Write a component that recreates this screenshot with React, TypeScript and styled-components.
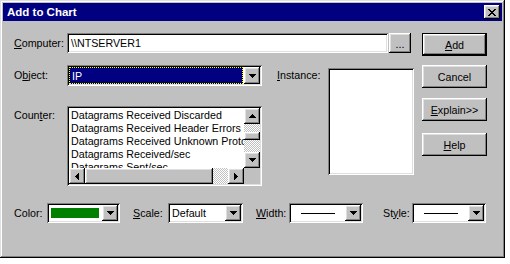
import styled, { createGlobalStyle, css } from "styled-components";

const GlobalStyle = createGlobalStyle`
  html, body {
    margin: 0;
    padding: 0;
    background: #fff;
  }
  body {
    font-family: "Liberation Sans", Arial, sans-serif;
    font-size: 10.7px;
    color: #000;
  }
`;

const raised = css`
  background: #c0c0c0;
  box-shadow: inset -1px -1px #000, inset 1px 1px #fff, inset -2px -2px #808080,
    inset 2px 2px #dfdfdf;
`;

const sunken = css`
  background: #fff;
  box-shadow: inset 1px 1px #808080, inset -1px -1px #fff, inset 2px 2px #000,
    inset -2px -2px #dfdfdf;
`;

const counters = [
  "Datagrams Received Discarded",
  "Datagrams Received Header Errors",
  "Datagrams Received Unknown Protocol",
  "Datagrams Received/sec",
  "Datagrams Sent/sec",
];

type Dir = "up" | "down" | "left" | "right";

const Arrow = ({ dir }: { dir: Dir }) => {
  const shapes: Record<Dir, string> = {
    down: "0,0 7,0 3.5,4",
    up: "3.5,0 7,4 0,4",
    left: "4,0 4,7 0,3.5",
    right: "0,0 4,3.5 0,7",
  };
  const vertical = dir === "up" || dir === "down";
  return (
    <svg width={vertical ? 7 : 4} height={vertical ? 4 : 7} shapeRendering="crispEdges">
      <polygon points={shapes[dir]} fill="#000" />
    </svg>
  );
};

const CloseGlyph = () => (
  <svg width="8" height="7" shapeRendering="crispEdges">
    <path
      d="M0 0h2v1h-2zM6 0h2v1h-2zM1 1h2v1h-2zM5 1h2v1h-2zM2 2h4v1h-4zM3 3h2v1h-2zM2 4h4v1h-4zM1 5h2v1h-2zM5 5h2v1h-2zM0 6h2v1h-2zM6 6h2v1h-2z"
      fill="#000"
    />
  </svg>
);

const Mn = ({ children }: { children: string }) => <u>{children}</u>;

function App() {
  return (
    <>
      <GlobalStyle />
      <Window>
        <TitleBar>
          <span>Add to Chart</span>
          <CloseButton>
            <CloseGlyph />
          </CloseButton>
        </TitleBar>
        <Client>
          <TopArea>
            <Main>
              <Row $h={20}>
                <Label $w={53}>
                  <Mn>C</Mn>omputer:
                </Label>
                <TextField>\\NTSERVER1</TextField>
                <BrowseButton>...</BrowseButton>
              </Row>
              <Middle>
                <LeftCol>
                  <Row $h={21}>
                    <Label $w={53}>
                      O<Mn>b</Mn>ject:
                    </Label>
                    <Combo $w={195} $h={21}>
                      <SelectedValue>IP</SelectedValue>
                      <DropButton>
                        <Arrow dir="down" />
                      </DropButton>
                    </Combo>
                  </Row>
                  <CounterRow>
                    <Label $w={53} $top={3}>
                      Coun<Mn>t</Mn>er:
                    </Label>
                    <ListBox>
                      <ListItems>
                        {counters.map((c) => (
                          <ListItem key={c}>{c}</ListItem>
                        ))}
                      </ListItems>
                      <VScroll>
                        <ScrollButton>
                          <Arrow dir="up" />
                        </ScrollButton>
                        <Track $size={8} />
                        <Thumb $w={16} $h={8} />
                        <Track />
                        <ScrollButton>
                          <Arrow dir="down" />
                        </ScrollButton>
                      </VScroll>
                      <HScroll>
                        <ScrollButton>
                          <Arrow dir="left" />
                        </ScrollButton>
                        <Thumb $w={128} $h={16} />
                        <Track />
                        <ScrollButton>
                          <Arrow dir="right" />
                        </ScrollButton>
                      </HScroll>
                      <Corner />
                    </ListBox>
                  </CounterRow>
                </LeftCol>
                <InstanceCol>
                  <Label $w={51} $top={4}>
                    <Mn>I</Mn>nstance:
                  </Label>
                  <InstanceList />
                </InstanceCol>
              </Middle>
            </Main>
            <Buttons>
              <PushButton $default $top={0}>
                <Mn>A</Mn>dd
              </PushButton>
              <PushButton $top={9}>Cancel</PushButton>
              <PushButton $top={10}>
                <Mn>E</Mn>xplain&gt;&gt;
              </PushButton>
              <PushButton $top={12}>
                <Mn>H</Mn>elp
              </PushButton>
            </Buttons>
          </TopArea>
          <BottomRow>
            <Label $w={33}>Color:</Label>
            <Combo $w={73} $h={20}>
              <ColorSwatch />
              <DropButton>
                <Arrow dir="down" />
              </DropButton>
            </Combo>
            <Label $w={35} $left={13}>
              <Mn>S</Mn>cale:
            </Label>
            <Combo $w={75} $h={20}>
              <ComboText>Default</ComboText>
              <DropButton>
                <Arrow dir="down" />
              </DropButton>
            </Combo>
            <Label $w={33} $left={13}>
              <Mn>W</Mn>idth:
            </Label>
            <Combo $w={74} $h={20}>
              <LineSample />
              <DropButton>
                <Arrow dir="down" />
              </DropButton>
            </Combo>
            <Label $w={29} $left={20}>
              St<Mn>y</Mn>le:
            </Label>
            <Combo $w={74} $h={20}>
              <LineSample />
              <DropButton>
                <Arrow dir="down" />
              </DropButton>
            </Combo>
          </BottomRow>
        </Client>
      </Window>
    </>
  );
}

const Window = styled.div`
  width: 505px;
  height: 258px;
  box-sizing: border-box;
  padding: 3px;
  background: #c0c0c0;
  box-shadow: inset -1px -1px #000, inset 1px 1px #dfdfdf, inset -2px -2px #808080,
    inset 2px 2px #fff;
  display: flex;
  flex-direction: column;
`;

const TitleBar = styled.div`
  height: 18px;
  flex-shrink: 0;
  background: #000080;
  color: #fff;
  font-weight: bold;
  font-size: 11.5px;
  display: flex;
  align-items: center;
  justify-content: space-between;
  padding: 0 2px 0 4px;
`;

const CloseButton = styled.div`
  ${raised};
  width: 16px;
  height: 14px;
  display: flex;
  align-items: center;
  justify-content: center;
  padding-right: 1px;
  box-sizing: border-box;
`;

const Client = styled.div`
  flex: 1;
  display: flex;
  flex-direction: column;
  padding: 12px 0 0 11px;
`;

const TopArea = styled.div`
  display: flex;
  align-items: flex-start;
`;

const Main = styled.div`
  width: 400px;
  display: flex;
  flex-direction: column;
`;

const Row = styled.div<{ $h: number }>`
  display: flex;
  align-items: center;
  height: ${(p) => p.$h}px;
`;

const Label = styled.div<{ $w: number; $top?: number; $left?: number }>`
  width: ${(p) => p.$w}px;
  flex-shrink: 0;
  white-space: nowrap;
  line-height: 13px;
  margin-top: ${(p) => p.$top ?? 0}px;
  margin-left: ${(p) => p.$left ?? 0}px;
  align-self: ${(p) => (p.$top !== undefined ? "flex-start" : "center")};
`;

const TextField = styled.div`
  ${sunken};
  width: 321px;
  height: 20px;
  box-sizing: border-box;
  padding-left: 4px;
  display: flex;
  align-items: center;
  white-space: nowrap;
`;

const BrowseButton = styled.div`
  ${raised};
  width: 22px;
  height: 20px;
  margin-left: 1px;
  box-sizing: border-box;
  display: flex;
  align-items: center;
  justify-content: center;
  padding-top: 1px;
`;

const Middle = styled.div`
  display: flex;
  align-items: flex-start;
  margin-top: 12px;
`;

const LeftCol = styled.div`
  width: 248px;
  display: flex;
  flex-direction: column;
`;

const Combo = styled.div<{ $w: number; $h: number }>`
  ${sunken};
  width: ${(p) => p.$w}px;
  height: ${(p) => p.$h}px;
  flex-shrink: 0;
  box-sizing: border-box;
  padding: 2px;
  display: flex;
  align-items: stretch;
`;

const SelectedValue = styled.div`
  flex: 1;
  margin: 0 1px 0 0;
  border: 1px dotted #ffff00;
  background: linear-gradient(#000080, #000080) padding-box,
    linear-gradient(#000, #000) border-box;
  color: #fff;
  padding-left: 2px;
  display: flex;
  align-items: center;
`;

const ComboText = styled.div`
  flex: 1;
  padding-left: 2px;
  display: flex;
  align-items: center;
`;

const ColorSwatch = styled.div`
  width: 48px;
  height: 10px;
  margin: 3px 3px 0 2px;
  background: #008000;
`;

const LineSample = styled.div`
  width: 34px;
  height: 1px;
  margin: 0 auto 0 10px;
  align-self: center;
  background: #000;
`;

const DropButton = styled.div`
  ${raised};
  width: 16px;
  flex-shrink: 0;
  margin-left: auto;
  display: flex;
  align-items: center;
  justify-content: center;
`;

const CounterRow = styled.div`
  display: flex;
  margin-top: 20px;
`;

const ListBox = styled.div`
  ${sunken};
  width: 195px;
  height: 80px;
  box-sizing: border-box;
  padding: 2px;
  display: grid;
  grid-template-columns: 1fr 16px;
  grid-template-rows: 1fr 16px;
`;

const ListItems = styled.div`
  overflow: hidden;
  padding: 1px 0 0 2px;
  line-height: 13px;
  white-space: nowrap;
`;

const ListItem = styled.div`
  height: 13px;
`;

const checker = css`
  background: repeating-conic-gradient(#c0c0c0 0 25%, #fff 0 50%) 0 0 / 2px 2px;
`;

const VScroll = styled.div`
  display: flex;
  flex-direction: column;
`;

const HScroll = styled.div`
  display: flex;
`;

const ScrollButton = styled.div`
  ${raised};
  width: 16px;
  height: 16px;
  flex-shrink: 0;
  display: flex;
  align-items: center;
  justify-content: center;
`;

const Track = styled.div<{ $size?: number }>`
  ${checker};
  flex: ${(p) => (p.$size ? `0 0 ${p.$size}px` : "1")};
`;

const Thumb = styled.div<{ $w: number; $h: number }>`
  ${raised};
  width: ${(p) => p.$w}px;
  height: ${(p) => p.$h}px;
  flex-shrink: 0;
`;

const Corner = styled.div`
  background: #c0c0c0;
`;

const InstanceCol = styled.div`
  display: flex;
  align-items: flex-start;
  margin-left: 15px;
`;

const InstanceList = styled.div`
  ${sunken};
  width: 86px;
  height: 107px;
  margin-top: 3px;
`;

const Buttons = styled.div`
  display: flex;
  flex-direction: column;
  margin-left: 8px;
  width: 65px;
`;

const PushButton = styled.div<{ $default?: boolean; $top: number }>`
  ${raised};
  height: 23px;
  margin-top: ${(p) => p.$top}px;
  display: flex;
  align-items: center;
  justify-content: center;
  ${(p) =>
    p.$default &&
    css`
      box-shadow: inset 0 0 0 1px #000, inset -2px -2px #000, inset 2px 2px #fff,
        inset -3px -3px #808080, inset 3px 3px #dfdfdf;
    `}
`;

const BottomRow = styled.div`
  display: flex;
  align-items: center;
  height: 20px;
  margin-top: 17px;
`;

export default App;
